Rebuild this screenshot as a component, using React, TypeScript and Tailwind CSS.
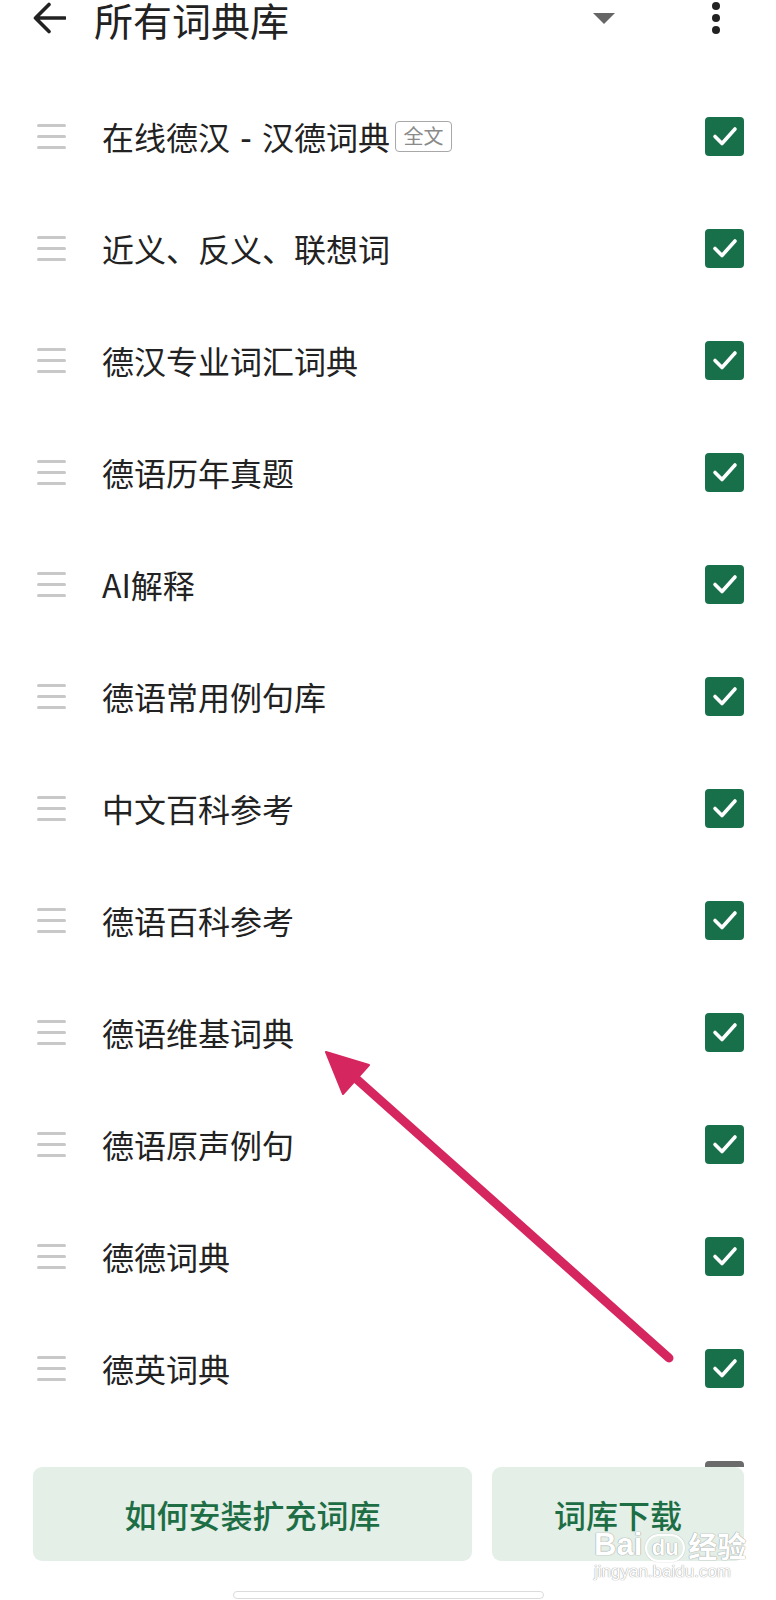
import React from "react";

const items = [
  "在线德汉－汉德词典",
  "近义、反义、联想词",
  "德汉专业词汇词典",
  "德语历年真题",
  "AI解释",
  "德语常用例句库",
  "中文百科参考",
  "德语百科参考",
  "德语维基词典",
  "德语原声例句",
  "德德词典",
  "德英词典",
];

function Handle() {
  return (
    <div className="ml-[37px] flex w-[29px] flex-col gap-[8px]">
      <div className="h-[3px] rounded-full bg-[#c8c8c8]" />
      <div className="h-[3px] rounded-full bg-[#c8c8c8]" />
      <div className="h-[3px] rounded-full bg-[#c8c8c8]" />
    </div>
  );
}

function Check() {
  return (
    <div className="mr-[32px] ml-auto flex h-[39px] w-[39px] items-center justify-center rounded-[4px] bg-[#17704a]">
      <svg width="26" height="26" viewBox="0 0 26 26">
        <path d="M3 13.5 L10 20.5 L23 6" fill="none" stroke="#fff" strokeWidth="3.6" strokeLinecap="round" strokeLinejoin="round" />
      </svg>
    </div>
  );
}

function Label({ t }: { t: string }) {
  if (t.includes("－")) {
    const [a, b] = t.split("－");
    return (
      <span className="flex items-center">
        <span>{a}</span>
        <span className="inline-block w-[32px] text-center font-medium">-</span>
        <span>{b}</span>
      </span>
    );
  }
  return <span>{t}</span>;
}

export default function App() {
  return (
    <div
      className="relative h-[1600px] w-[776px] overflow-hidden bg-white text-[#222]"
      style={{ fontFamily: '"Noto Sans CJK SC", "Noto Sans", sans-serif' }}
    >
      {/* header */}
      <div className="flex h-[80px] items-start">
        <div className="ml-[32px] mt-[2px] h-[32px] w-[34px]">
          <svg width="34" height="32" viewBox="0 0 34 32">
            <path d="M33 16 H4 M17 2.5 L3.5 16 L17 29.5" fill="none" stroke="#222" strokeWidth="3.6" strokeLinecap="round" strokeLinejoin="round" />
          </svg>
        </div>
        <div className="ml-[28px] text-[39px] leading-[38px]">所有词典库</div>
        <div className="ml-auto mt-[13px] h-0 w-0 border-x-[11px] border-t-[11px] border-x-transparent border-t-[#666]" />
        <div className="mr-[56px] ml-[97px] mt-[2px] flex flex-col gap-[4px]">
          <div className="h-[8px] w-[8px] rounded-full bg-[#222]" />
          <div className="h-[8px] w-[8px] rounded-full bg-[#222]" />
          <div className="h-[8px] w-[8px] rounded-full bg-[#222]" />
        </div>
      </div>

      {/* list */}
      <div className="flex flex-col">
        {items.map((t, i) => (
          <div key={i} className="flex h-[112px] items-center">
            <Handle />
            <div className="ml-[36px] flex items-center text-[32px] leading-[40px]">
              <Label t={t} />
              {i === 0 && (
                <span className="ml-[5px] flex h-[31px] w-[57px] items-center justify-center rounded-[4px] border-[1.5px] border-[#a8a8a8] text-[20px] leading-[22px] text-[#8a8a8a]">
                  全文
                </span>
              )}
            </div>
            <Check />
          </div>
        ))}
        <div className="flex h-[112px] items-center">
          <Handle />
          <div className="mr-[32px] ml-auto h-[39px] w-[39px] rounded-[4px] bg-[#6b6b6b]" />
        </div>
      </div>

      {/* bottom bar */}
      <div className="absolute inset-x-0 top-[1467px] bottom-0 bg-white">
        <div className="flex gap-[20px] pl-[33px] pr-[32px]">
          <div className="flex h-[94px] w-[439px] items-center justify-center rounded-[9px] bg-[#e4efe8] text-[32px] font-medium text-[#1d6e45]">
            如何安装扩充词库
          </div>
          <div className="flex h-[94px] flex-1 items-center justify-center rounded-[9px] bg-[#e4efe8] text-[32px] font-medium text-[#1d6e45]">
            词库下载
          </div>
        </div>
        <div className="mx-auto mt-[30px] h-[8px] w-[311px] rounded-full border border-[#dcdcdc] bg-white" />
      </div>

      {/* watermark */}
      <div
        className="absolute left-[594px] top-[1528px] flex flex-col items-start text-white"
        style={{ fontFamily: '"Liberation Sans", "Noto Sans CJK SC", sans-serif', textShadow: "0 0 1px #9a9a9a, 0 0 1px #9a9a9a" }}
      >
        <div className="flex items-end text-[31px] font-bold leading-[34px]">
          <span>Bai</span>
          <span className="relative mx-[3px] flex h-[28px] w-[40px] items-center justify-center rounded-full border-2 border-white text-[22px] leading-[22px]" style={{ boxShadow: "0 0 1px #9a9a9a" }}>
            du
          </span>
          <span className="text-[29px]" style={{ fontFamily: '"Noto Sans CJK SC", sans-serif' }}>经验</span>
        </div>
        <div className="mt-[1px] text-[17px] leading-[18px] opacity-90">jingyan.baidu.com</div>
      </div>

      {/* annotation arrow */}
      <svg className="pointer-events-none absolute left-0 top-0" width="776" height="1600" viewBox="0 0 776 1600">
        <line x1="669" y1="1358" x2="352" y2="1075" stroke="#d6265f" strokeWidth="9" strokeLinecap="round" />
        <polygon points="326,1052 369,1065 343,1094" fill="#d6265f" stroke="#d6265f" strokeWidth="2" strokeLinejoin="round" />
      </svg>
    </div>
  );
}
